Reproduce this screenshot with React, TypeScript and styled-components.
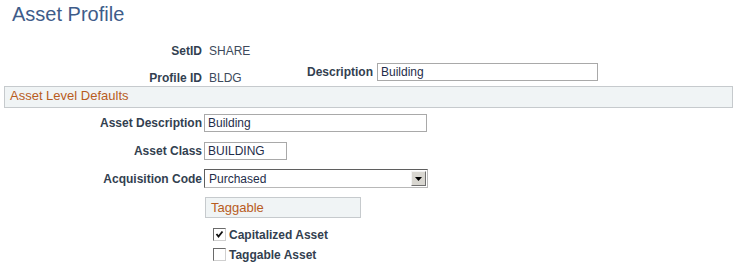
import styled, { createGlobalStyle } from 'styled-components';

const GlobalStyle = createGlobalStyle`
    body {
        margin: 0;
        background: #ffffff;
        font-family: 'Liberation Sans', Arial, sans-serif;
    }
`;

const Page = styled.div`
    width: 737px;
    height: 269px;
    overflow: hidden;
    display: flex;
    flex-direction: column;
`;

const PageTitle = styled.h1`
    margin: 0;
    padding: 3px 0 0 12px;
    font-size: 20px;
    line-height: 23px;
    font-weight: normal;
    color: #3e5c8a;
`;

const HeaderRow = styled.div<{ $top: number; $height: number }>`
    display: flex;
    align-items: flex-start;
    margin-top: ${(p) => p.$top}px;
    height: ${(p) => p.$height}px;
`;

const Label = styled.div<{ $width: number; $drop?: number }>`
    width: ${(p) => p.$width}px;
    flex-shrink: 0;
    padding-top: ${(p) => p.$drop || 0}px;
    text-align: right;
    white-space: nowrap;
    font-size: 12px;
    line-height: 18px;
    font-weight: bold;
    color: #333f50;
`;

const DisplayValue = styled.div<{ $width?: number; $drop?: number }>`
    width: ${(p) => (p.$width ? `${p.$width}px` : 'auto')};
    flex-shrink: 0;
    padding: ${(p) => p.$drop || 0}px 0 0 7px;
    box-sizing: border-box;
    font-size: 12px;
    line-height: 18px;
    color: #3d4a5c;
`;

const TextBox = styled.div<{ $width: number; $left: number }>`
    width: ${(p) => p.$width}px;
    height: 18px;
    margin-left: ${(p) => p.$left}px;
    box-sizing: border-box;
    border: 1px solid #a9a9a9;
    background: #ffffff;
    padding-left: 3px;
    font-size: 12px;
    line-height: 16px;
    color: #1f2d4a;
    white-space: nowrap;
`;

const SectionBar = styled.div`
    width: 729px;
    height: 22px;
    margin-left: 4px;
    box-sizing: border-box;
    border: 1px solid #c6cacd;
    background: #f0f4f5;
    padding: 0 0 2px 5px;
    font-size: 13px;
    line-height: 18px;
    color: #b85c1e;
`;

const FormRow = styled.div<{ $top: number }>`
    display: flex;
    align-items: center;
    margin-top: ${(p) => p.$top}px;
`;

const SelectBox = styled.div`
    width: 224px;
    height: 19px;
    margin-left: 2px;
    box-sizing: border-box;
    border: 1px solid;
    border-color: #5f5f5f #b8b8b8 #b8b8b8 #5f5f5f;
    background: #ffffff;
    display: flex;
    align-items: center;
    justify-content: space-between;
    padding-right: 1px;
`;

const SelectText = styled.span`
    padding-left: 4px;
    font-size: 12px;
    line-height: 16px;
    color: #1f2d4a;
`;

const SelectButton = styled.span`
    width: 15px;
    height: 15px;
    box-sizing: border-box;
    background: #d8d6d0;
    border: 1px solid;
    border-color: #f4f4f4 #6f6f6f #6f6f6f #f4f4f4;
    display: flex;
    align-items: center;
    justify-content: center;
`;

const GroupBox = styled.div`
    width: 156px;
    height: 21px;
    margin: 9px 0 0 205px;
    box-sizing: border-box;
    border: 1px solid #c6cacd;
    background: #f0f4f5;
    padding-left: 5px;
    font-size: 13px;
    line-height: 19px;
    color: #b85c1e;
`;

const CheckRow = styled.label<{ $top: number }>`
    display: flex;
    align-items: center;
    margin: ${(p) => p.$top}px 0 0 213px;
    height: 13px;
    font-size: 12px;
    font-weight: bold;
    color: #333f50;
`;

const CheckSquare = styled.span`
    width: 13px;
    height: 13px;
    box-sizing: border-box;
    border: 1px solid;
    border-color: #6a6a6a #cfcfcf #cfcfcf #6a6a6a;
    background: #ffffff;
    display: flex;
    align-items: center;
    justify-content: center;
    margin-right: 3px;
`;

const Check = ({ checked, label, top }: { checked: boolean; label: string; top: number }) => (
    <CheckRow $top={top}>
        <CheckSquare>
            {checked && (
                <svg width="9" height="9" viewBox="0 0 9 9">
                    <polyline points="1.5,4 3.5,6.5 7.5,1.5" fill="none" stroke="#111" strokeWidth="1.8" />
                </svg>
            )}
        </CheckSquare>
        {label}
    </CheckRow>
);

export default function App() {
    return (
        <Page>
            <GlobalStyle />
            <PageTitle>Asset Profile</PageTitle>

            <HeaderRow $top={16} $height={21}>
                <Label $width={202}>SetID</Label>
                <DisplayValue>SHARE</DisplayValue>
            </HeaderRow>
            <HeaderRow $top={0} $height={23}>
                <Label $width={202} $drop={6}>Profile ID</Label>
                <DisplayValue $width={102} $drop={6}>BLDG</DisplayValue>
                <Label $width={69}>Description</Label>
                <TextBox $width={221} $left={4}>Building</TextBox>
            </HeaderRow>

            <SectionBar>Asset Level Defaults</SectionBar>

            <FormRow $top={6}>
                <Label $width={202}>Asset Description</Label>
                <TextBox $width={223} $left={2}>Building</TextBox>
            </FormRow>
            <FormRow $top={10}>
                <Label $width={202}>Asset Class</Label>
                <TextBox $width={83} $left={2}>BUILDING</TextBox>
            </FormRow>
            <FormRow $top={9}>
                <Label $width={202}>Acquisition Code</Label>
                <SelectBox>
                    <SelectText>Purchased</SelectText>
                    <SelectButton>
                        <svg width="7" height="4" viewBox="0 0 7 4">
                            <polygon points="0,0 7,0 3.5,4" fill="#000" />
                        </svg>
                    </SelectButton>
                </SelectBox>
            </FormRow>

            <GroupBox>Taggable</GroupBox>
            <Check checked label="Capitalized Asset" top={10} />
            <Check checked={false} label="Taggable Asset" top={7} />
        </Page>
    );
}
